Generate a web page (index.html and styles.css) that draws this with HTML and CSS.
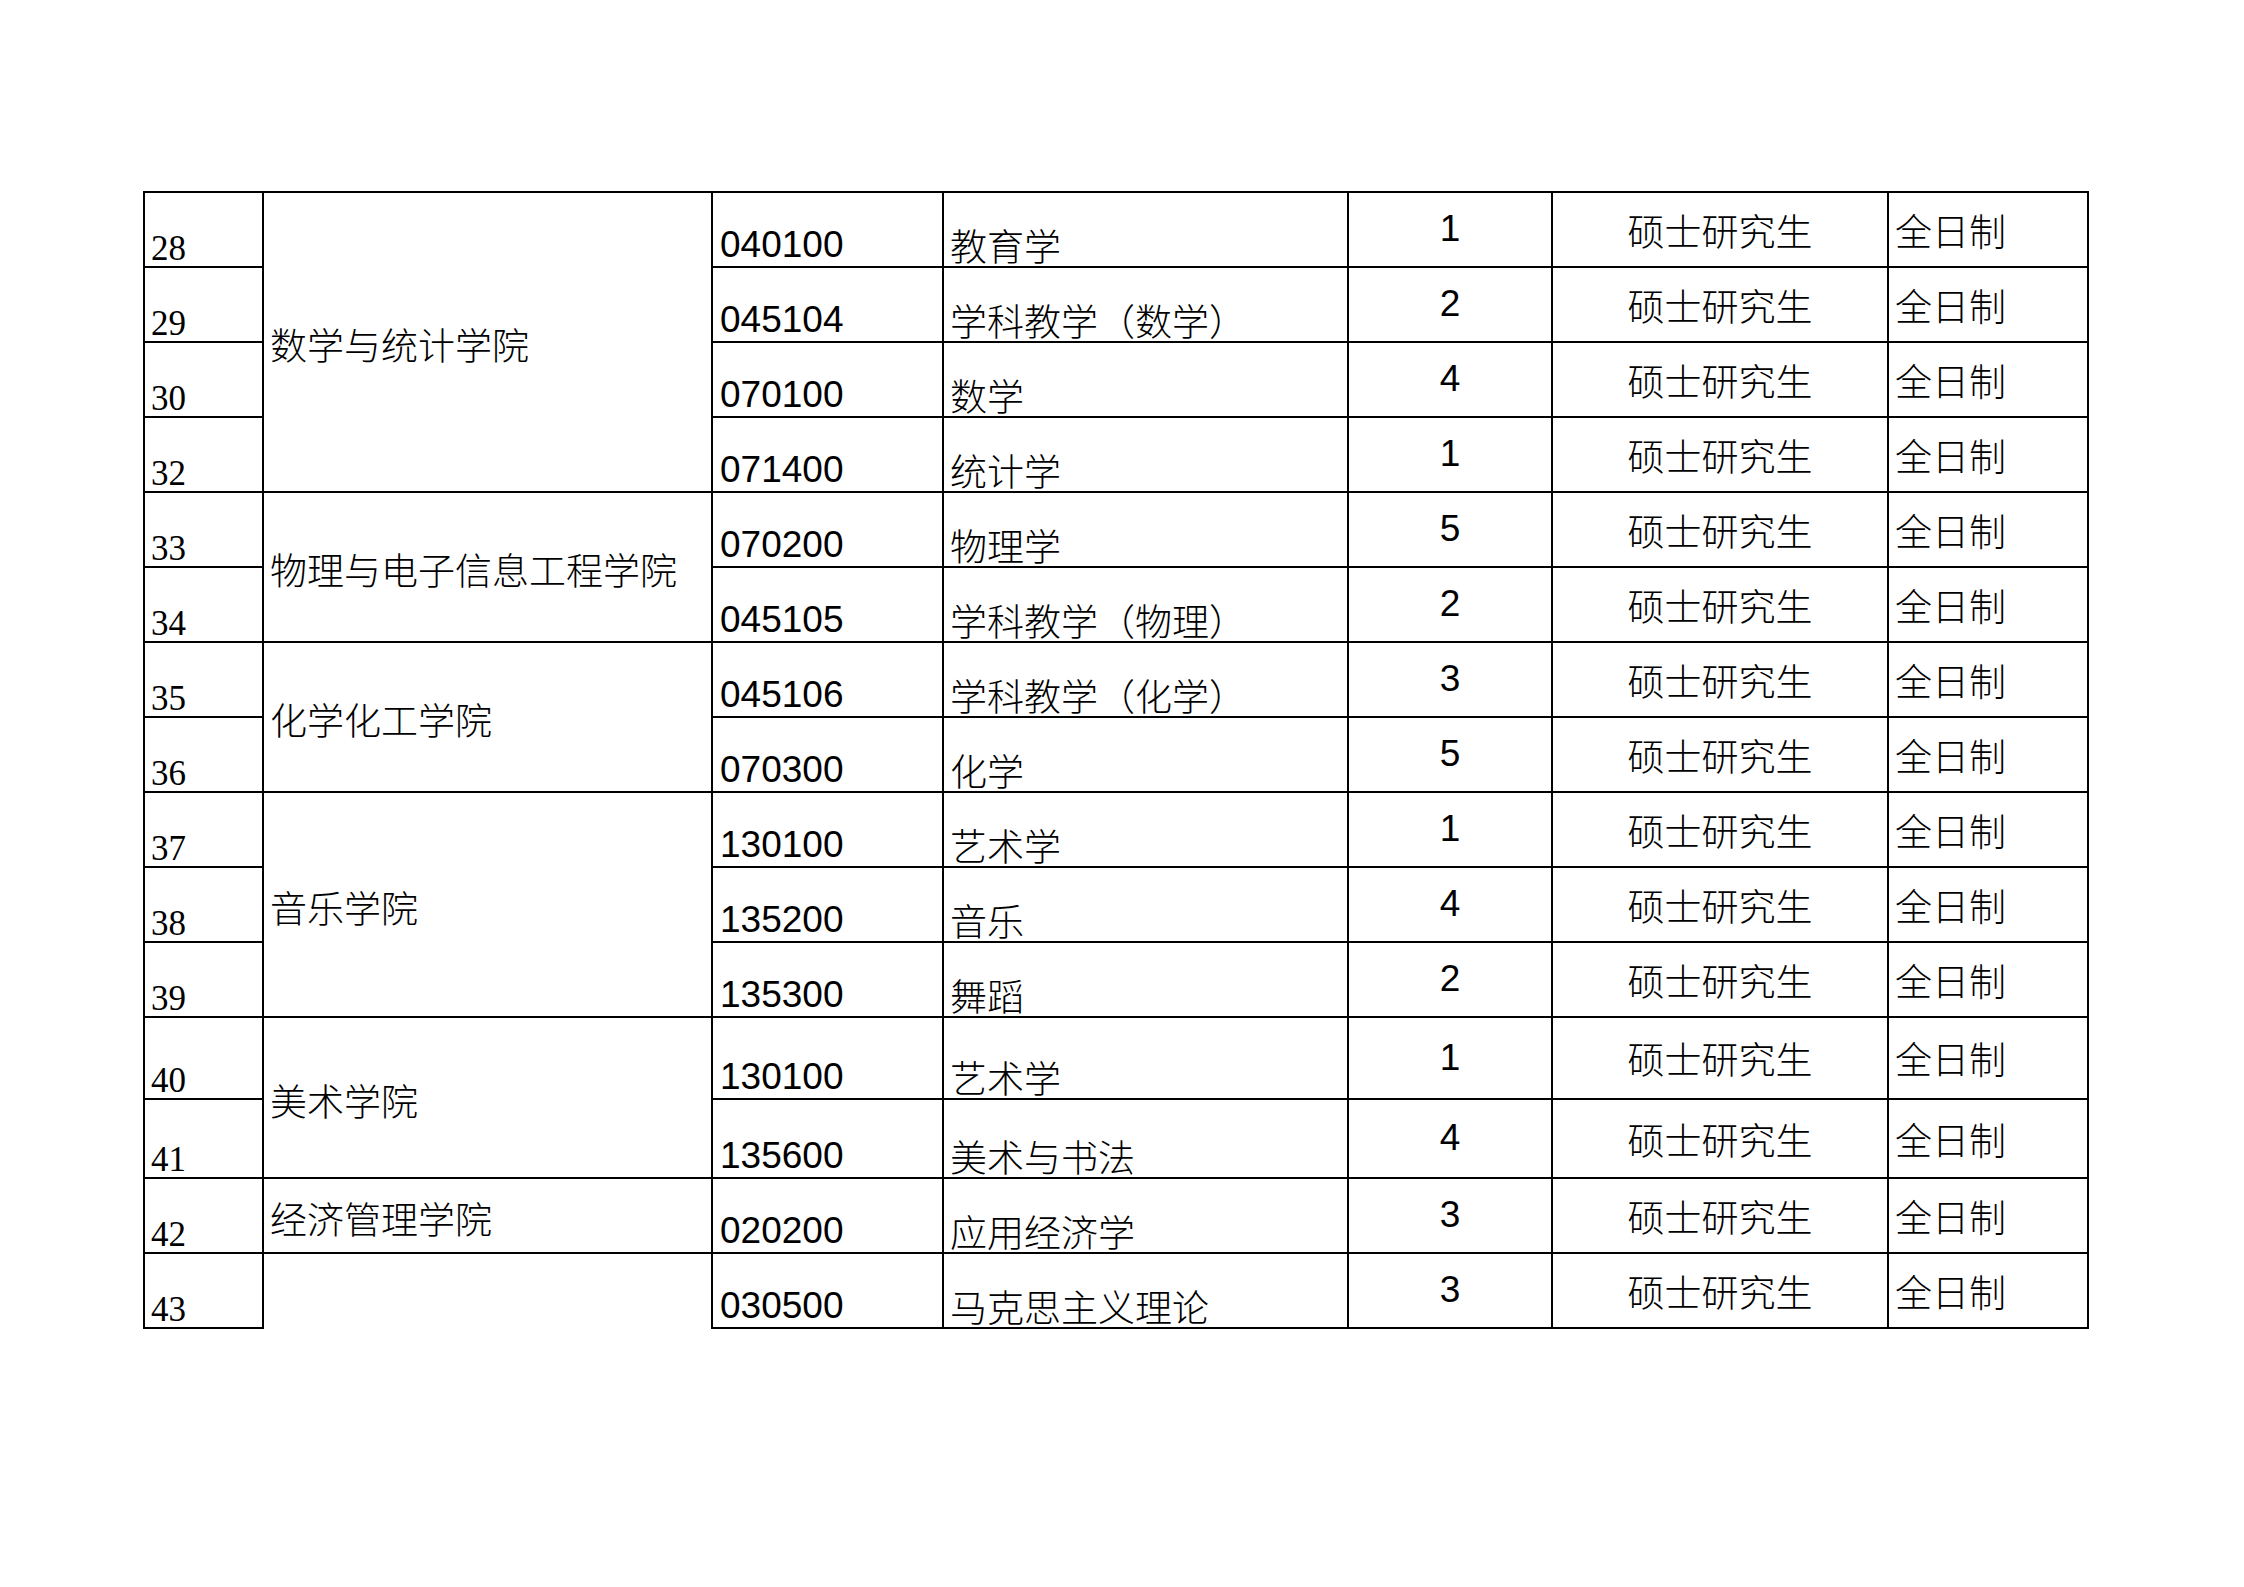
FILE: index.html
```html
<!DOCTYPE html>
<html lang="zh-CN">
<head>
<meta charset="utf-8">
<title>招生计划</title>
<link rel="stylesheet" href="styles.css">
</head>
<body>
<div class="page">
<table class="plan">
<colgroup>
<col class="c-no"><col class="c-college"><col class="c-code"><col class="c-major"><col class="c-count"><col class="c-degree"><col class="c-type">
</colgroup>
<tbody>
<tr><td class="no">28</td><td class="college" rowspan="4">数学与统计学院</td><td class="code">040100</td><td class="major">教育学</td><td class="count">1</td><td class="degree">硕士研究生</td><td class="type">全日制</td></tr>
<tr><td class="no">29</td><td class="code">045104</td><td class="major">学科教学（数学）</td><td class="count">2</td><td class="degree">硕士研究生</td><td class="type">全日制</td></tr>
<tr><td class="no">30</td><td class="code">070100</td><td class="major">数学</td><td class="count">4</td><td class="degree">硕士研究生</td><td class="type">全日制</td></tr>
<tr><td class="no">32</td><td class="code">071400</td><td class="major">统计学</td><td class="count">1</td><td class="degree">硕士研究生</td><td class="type">全日制</td></tr>
<tr><td class="no">33</td><td class="college" rowspan="2">物理与电子信息工程学院</td><td class="code">070200</td><td class="major">物理学</td><td class="count">5</td><td class="degree">硕士研究生</td><td class="type">全日制</td></tr>
<tr><td class="no">34</td><td class="code">045105</td><td class="major">学科教学（物理）</td><td class="count">2</td><td class="degree">硕士研究生</td><td class="type">全日制</td></tr>
<tr><td class="no">35</td><td class="college" rowspan="2">化学化工学院</td><td class="code">045106</td><td class="major">学科教学（化学）</td><td class="count">3</td><td class="degree">硕士研究生</td><td class="type">全日制</td></tr>
<tr><td class="no">36</td><td class="code">070300</td><td class="major">化学</td><td class="count">5</td><td class="degree">硕士研究生</td><td class="type">全日制</td></tr>
<tr><td class="no">37</td><td class="college" rowspan="3">音乐学院</td><td class="code">130100</td><td class="major">艺术学</td><td class="count">1</td><td class="degree">硕士研究生</td><td class="type">全日制</td></tr>
<tr><td class="no">38</td><td class="code">135200</td><td class="major">音乐</td><td class="count">4</td><td class="degree">硕士研究生</td><td class="type">全日制</td></tr>
<tr><td class="no">39</td><td class="code">135300</td><td class="major">舞蹈</td><td class="count">2</td><td class="degree">硕士研究生</td><td class="type">全日制</td></tr>
<tr class="tall-a"><td class="no">40</td><td class="college" rowspan="2">美术学院</td><td class="code">130100</td><td class="major">艺术学</td><td class="count">1</td><td class="degree">硕士研究生</td><td class="type">全日制</td></tr>
<tr class="tall-b"><td class="no">41</td><td class="code">135600</td><td class="major">美术与书法</td><td class="count">4</td><td class="degree">硕士研究生</td><td class="type">全日制</td></tr>
<tr><td class="no">42</td><td class="college">经济管理学院</td><td class="code">020200</td><td class="major">应用经济学</td><td class="count">3</td><td class="degree">硕士研究生</td><td class="type">全日制</td></tr>
<tr><td class="no">43</td><td class="college open"></td><td class="code">030500</td><td class="major">马克思主义理论</td><td class="count">3</td><td class="degree">硕士研究生</td><td class="type">全日制</td></tr>
</tbody>
</table>
</div>
</body>
</html>
```

FILE: styles.css
```css
html, body {
  margin: 0;
  padding: 0;
  background: #ffffff;
}

.page {
  width: 2244px;
  height: 1587px;
  padding: 191px 0 0 143px;
  box-sizing: border-box;
}

.plan {
  border-collapse: collapse;
  table-layout: fixed;
  width: 1946px;
  color: #000;
}

.c-no { width: 119px; }
.c-college { width: 449px; }
.c-code { width: 231px; }
.c-major { width: 405px; }
.c-count { width: 204px; }
.c-degree { width: 336px; }
.c-type { width: 200px; }

.plan tr { height: 75px; }
.plan tr.tall-a { height: 82px; }
.plan tr.tall-b { height: 79px; }

.plan td {
  border: 2px solid #000;
  padding: 0 6px;
  line-height: 1.1;
  white-space: nowrap;
  font-family: "Noto Sans CJK SC", sans-serif;
  font-weight: 300;
  font-size: 37px;
  text-spacing-trim: space-all;
}

.plan td.open {
  border-bottom: hidden;
}

.plan td.no {
  font-family: "Liberation Serif", "Noto Sans CJK SC", serif;
  font-weight: 400;
  font-size: 35px;
  line-height: 1;
  vertical-align: bottom;
  padding-bottom: 0;
}

.plan td.code {
  font-family: "Liberation Sans", Arial, sans-serif;
  font-weight: 400;
  font-size: 37px;
  vertical-align: bottom;
  padding-bottom: 0;
  padding-left: 7px;
}

.plan td.major {
  vertical-align: bottom;
  padding-bottom: 0;
}

.plan td.college {
  vertical-align: middle;
  padding-top: 5px;
}

.plan td.count {
  font-family: "Liberation Sans", Arial, sans-serif;
  font-weight: 400;
  font-size: 37px;
  text-align: center;
  vertical-align: middle;
  padding-bottom: 0;
}

.plan td.degree {
  text-align: center;
  vertical-align: middle;
  padding-top: 1px;
}

.plan td.type {
  vertical-align: middle;
  padding-top: 1px;
}
```
